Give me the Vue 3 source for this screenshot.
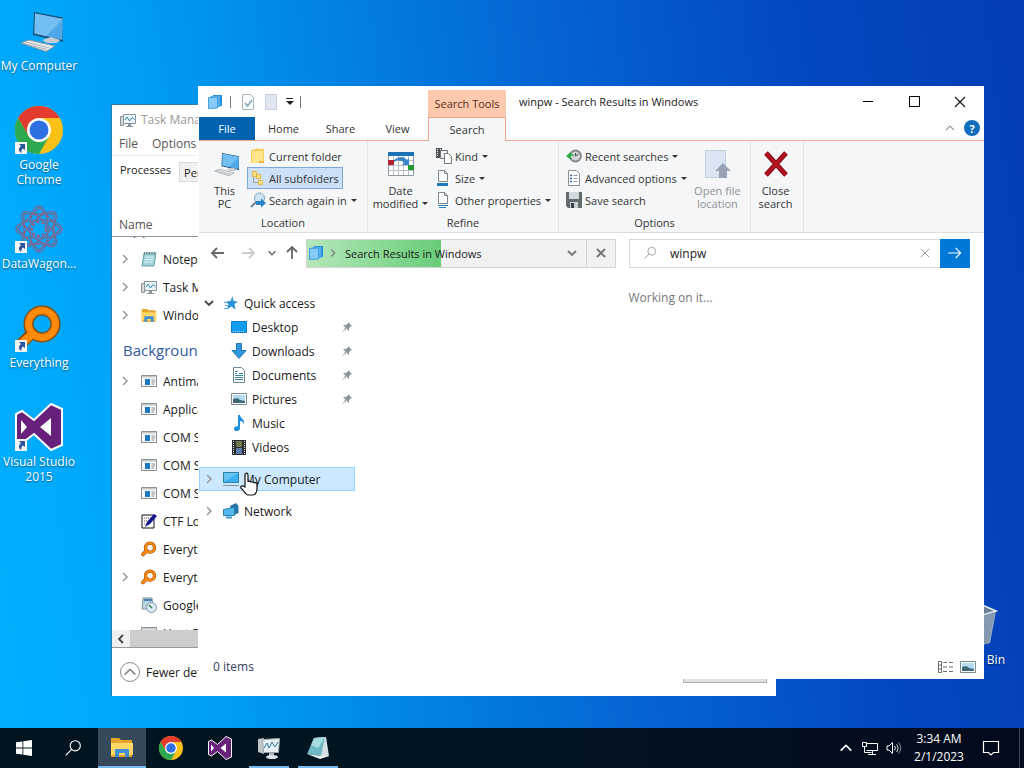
<template>
  <div class="screen">
    <svg class="sprite" aria-hidden="true">
      <symbol id="i-pc" viewBox="0 0 48 48">
        <path d="M19 5 50 11 49 35 18 28z" fill="#1d4f72" />
        <path d="M20 6.500 48 12 47.500 33 19.500 26.500z" fill="#4fa9e8" />
        <path d="M20 6.500 48 12 31 29 19.500 26.500z" fill="#74bff2" />
        <path d="M27 33 36 30 45 33 42 36 32 36z" fill="#c7cdd2" />
        <path d="M6 36 14 33 40 39 31 44.500z" fill="#e8ebed" stroke="#8d979e" />
        <path d="M11 35 34 41M9 36.500 32 42.500" stroke="#aab3b9" />
      </symbol>
      <symbol id="i-chrome" viewBox="0 0 48 48">
        <circle cx="24" cy="24" r="24" fill="#fbc116" />
        <path d="M24 12 44.800 12A24 24 0 0 0 3.200 12L13.600 30z" fill="#e33b2e" />
        <path d="M3.200 12A24 24 0 0 0 24 48L34.400 30 24 34 13.600 30z" fill="#2da94f" />
        <circle cx="24" cy="24" r="12" fill="#fff" />
        <circle cx="24" cy="24" r="9.500" fill="#2f6fe4" />
      </symbol>
      <symbol id="i-wagon" viewBox="0 0 48 48">
        <g fill="none" stroke="#6f6d9c" stroke-width="1.500">
          <rect x="9" y="9" width="30" height="30" />
          <rect x="9" y="9" width="30" height="30" transform="rotate(45 24 24)" />
          <ellipse cx="24" cy="24" rx="23" ry="9" />
          <ellipse cx="24" cy="24" rx="23" ry="9" transform="rotate(45 24 24)" />
          <ellipse cx="24" cy="24" rx="23" ry="9" transform="rotate(90 24 24)" />
          <ellipse cx="24" cy="24" rx="23" ry="9" transform="rotate(135 24 24)" />
          <circle cx="24" cy="24" r="7" stroke="#a05c78" stroke-width="2" stroke-dasharray="3 2" />
          <circle cx="24" cy="24" r="15" stroke="#a05c78" stroke-dasharray="2 4" />
        </g>
      </symbol>
      <symbol id="i-every" viewBox="0 0 48 48">
        <path d="M6 40 17 29" stroke="#9a4b00" stroke-width="11" stroke-linecap="round" />
        <circle cx="27" cy="20" r="13.500" fill="none" stroke="#8e4a0c" stroke-width="10" />
        <path d="M6 40 17 30" stroke="#ff8a0c" stroke-width="8" stroke-linecap="round" />
        <circle cx="27" cy="20" r="13.500" fill="none" stroke="#ff8a0c" stroke-width="7" />
      </symbol>
      <symbol id="i-vs" viewBox="0 0 48 48">
        <path
          d="M36 1 47 6V42L36 47 19 31 7 40 1 37V11L7 8 19 17z"
          fill="#68217a" stroke="#fff" stroke-width="2"
        />
        <path d="M36 15V33L25 24zM6 17V31L12 24z" fill="#fff" />
      </symbol>
      <symbol id="i-bin" viewBox="0 0 48 48">
        <path d="M6 8 28 2 46 10 40 42 24 46 10 42z" fill="#9fb3c6" />
        <path d="M6 8 28 2 46 10 26 16z" fill="#687f98" stroke="#e4ecf3" stroke-width="1.500" />
        <path d="M28 16 45 11 39 42 28 45z" fill="#8499ad" />
      </symbol>
      <symbol id="i-shortcut" viewBox="0 0 12 12">
        <path d="M0 0h12v12H0z" fill="#f4f4f4" />
        <path d="M4 2h6v6L8 6.500C6.500 7.500 6 9 6.500 11 3.500 9.500 3 6.500 6 4z" fill="#2b579a" />
      </symbol>
      <symbol id="i-taskmgr" viewBox="0 0 16 16">
        <path d="M0.500 4.500h3v9h-3z" fill="#d5d9db" stroke="#8b9599" />
        <path d="M3.500 2.500h12v9h-12z" fill="#eaf6fa" stroke="#8b9599" />
        <path d="M5 8 7 5 9.500 9 12 5.500 14.500 7.500" fill="none" stroke="#3187a8" />
        <path d="M8 12h3v2H8zM6 14h7v1H6z" fill="#8b9599" />
      </symbol>
      <symbol id="i-notepad" viewBox="0 0 16 16">
        <path d="M3 2h12l-2 13H1z" fill="#9fd3db" stroke="#6aa0a8" />
        <path d="M3.500 1v2.500M6 1v2.500M8.500 1v2.500M11 1v2.500M13.500 1v2.500" stroke="#69787b" />
        <path d="M4 6h8.500M3.700 8.500h8.500M3.300 11h8.500" stroke="#dff2f4" />
      </symbol>
      <symbol id="i-explorer" viewBox="0 0 24 24">
        <path d="M1 3h8l2 2h11v17H1z" fill="#e3a52c" />
        <path d="M1 8h22v12H1z" fill="#ffd767" />
        <path d="M5 14h14v8h-4v-4H9v4H5z" fill="#3f8fd2" />
      </symbol>
      <symbol id="i-proc" viewBox="0 0 16 16">
        <path d="M0.500 2.500h15v11h-15z" fill="#f7f9fa" stroke="#8a9297" />
        <path d="M1 3h14v1.500H1z" fill="#c3c9cd" />
        <path d="M4 6h5v6H4z" fill="#1c77c4" />
        <path d="M10.500 7h3.500M10.500 9h3.500M10.500 11h2.500" stroke="#8a9297" />
      </symbol>
      <symbol id="i-ctf" viewBox="0 0 16 16">
        <path d="M1 2h12v13H1z" fill="#fff" stroke="#111" />
        <path d="M3 5h7M3 8h5M3 11h3" stroke="#555" stroke-dasharray="1 1" />
        <path d="M4 14 6 9 13 1 16 3 9 11z" fill="#14148c" />
      </symbol>
      <symbol id="i-installer" viewBox="0 0 16 16">
        <path d="M2 1h9l1 11H1z" fill="#b9d3dd" stroke="#7b97a4" />
        <path d="M3 3h8" stroke="#4f7fb0" stroke-width="2" />
        <circle cx="10.500" cy="10.500" r="5" fill="#dbe9f6" stroke="#7d94ab" />
        <path d="M8 8 11 11" stroke="#3f8f4a" stroke-width="1.500" />
      </symbol>
      <symbol id="i-stack" viewBox="0 0 16 16">
        <path d="M6 1 15 1V12L6 13z" fill="#2a8fdb" />
        <path d="M3.500 2 13 2V13L3.500 14z" fill="#57b0ee" />
        <path d="M1.500 3.500 10.500 3V14L1.500 14.500z" fill="#86cbf8" stroke="#3f9fe2" />
      </symbol>
      <symbol id="i-folder" viewBox="0 0 16 16">
        <path d="M1 2 9 0 9 1h5v14H1z" fill="#f4cf5c" />
        <path d="M2 3h11v12H2z" fill="#ffe48c" />
        <path d="M9 13h5v2H9z" fill="#e5b93f" />
      </symbol>
      <symbol id="i-subfolders" viewBox="0 0 16 16">
        <path d="M3.500 6v6.500h5" fill="none" stroke="#9a9f9a" />
        <path d="M2.500 1.500h4v5h-4zM6.500 4.500h4v4h-4zM8.500 10.500h4v4h-4z" fill="#fbdf80" stroke="#e0b848" />
      </symbol>
      <symbol id="i-again" viewBox="0 0 16 16">
        <circle cx="9.500" cy="6" r="5" fill="#cfe6f5" stroke="#83a5bb" />
        <path d="M1 15 6 10" stroke="#6d8799" stroke-width="2" />
        <path d="M6 9h5V6.500L16 11l-5 4.500V13H6z" fill="#2783c7" />
      </symbol>
      <symbol id="i-calendar" viewBox="0 0 28 28">
        <path d="M1.500 2.500h25v23h-25z" fill="#fff" stroke="#8b979e" />
        <path d="M1 2h26v4H1z" fill="#1b72b8" />
        <path d="M2 10.500h24M2 15.500h24M2 20.500h24M6.500 6v19M11.500 6v19M16.500 6v19M21.500 6v19" stroke="#b6c0c6" />
        <path d="M1 10h6v5H1z" fill="#b5202c" />
        <path d="M21 15h6v5h-6z" fill="#22992f" />
        <path d="M7 10C12 6 17 6 20 10l2-2v7h-7l2-2c-3-3-6-3-10-1z" fill="#3a86c8" />
      </symbol>
      <symbol id="i-kind" viewBox="0 0 16 16">
        <path d="M0 0h6v10H0z" fill="#4a4f52" />
        <path d="M1.500 1v8M4.500 1v8" stroke="#fff" stroke-dasharray="1 1" />
        <path d="M4.500 2.500h7v8h-7z" fill="#eef1f3" stroke="#6f777c" />
        <path d="M8.500 5.500h4l3 3v7h-7z" fill="#fff" stroke="#6f777c" />
      </symbol>
      <symbol id="i-size" viewBox="0 0 16 16">
        <path d="M2.500 0.500h6l3 3v8h-9z" fill="#fff" stroke="#7d868b" />
        <path d="M8.500 0.500v3h3" fill="none" stroke="#7d868b" />
        <path d="M1 13h11v3H1z" fill="#1a78be" />
      </symbol>
      <symbol id="i-props" viewBox="0 0 16 16">
        <path d="M2.500 0.500h6l3 3v8h-9z" fill="#fff" stroke="#7d868b" />
        <path d="M8.500 0.500v3h3" fill="none" stroke="#7d868b" />
        <path d="M2 13.500h10M3 15.500h7" stroke="#2f83ba" />
      </symbol>
      <symbol id="i-recent" viewBox="0 0 16 16">
        <circle cx="9.500" cy="8" r="5.500" fill="#cfd4d6" stroke="#80888c" stroke-width="1.800" />
        <path d="M9.500 5V8l3-2" fill="none" stroke="#555" />
        <path d="M0 8 5 3.500V6c2 0 3 .5 4 2-1.500-.7-2.500-.5-4 0v4z" fill="#2fa84a" />
      </symbol>
      <symbol id="i-advanced" viewBox="0 0 16 16">
        <path d="M2.500 0.500h8l3 3v12h-11z" fill="#fff" stroke="#868e93" />
        <path d="M4 5.500h2M4 8.500h2M4 11.500h2" stroke="#35679a" stroke-width="1.500" />
        <path d="M7.500 5.500h4M7.500 8.500h4M7.500 11.500h4" stroke="#8d969b" />
      </symbol>
      <symbol id="i-save" viewBox="0 0 16 16">
        <path d="M0 0h16v16H2L0 14z" fill="#646b70" />
        <path d="M3 0h10v7H3z" fill="#d3dade" />
        <path d="M4 10h8v6H4z" fill="#c9d0d4" />
        <path d="M5 11h3v5H5z" fill="#3b4145" />
      </symbol>
      <symbol id="i-openloc" viewBox="0 0 28 28">
        <path d="M2.500 0.500h20v27h-20z" fill="#dce5f2" stroke="#c3cfe0" />
        <path d="M20 13 28 21H24v7h-8v-7h-4z" fill="#98a3b5" />
      </symbol>
      <symbol id="i-close-red" viewBox="0 0 28 28">
        <path d="M4 3 24 25M24 3 4 25" stroke="#7e0f18" stroke-width="5" />
        <path d="M4 3 24 25M24 3 4 25" stroke="#b81420" stroke-width="3" />
      </symbol>
      <symbol id="i-qcheck" viewBox="0 0 16 16">
        <path d="M2.500 0.500h8l3 3v12h-11z" fill="#fafcfd" stroke="#a8b5bd" />
        <path d="M5 9 7.500 12 12 6" fill="none" stroke="#7ea6bd" stroke-width="1.500" />
      </symbol>
      <symbol id="i-qblank" viewBox="0 0 16 16">
        <path d="M2.500 0.500h11v15h-11z" fill="#e0e6f1" stroke="#c8d0df" />
      </symbol>
      <symbol id="i-star" viewBox="0 0 16 16">
        <path d="M9.500 1 10.500 6 15 6.500 11.500 9 12.500 14.500 8.500 11.500 4 14.500 5.500 9.500 3 6.500 7.500 6z" fill="#2a92da" />
        <path d="M1 7.500h4M2 10.500h4M1 13.500h4" stroke="#4faae4" />
      </symbol>
      <symbol id="i-desktop" viewBox="0 0 16 16">
        <path d="M0.500 2.500h15v11h-15z" fill="#129cf0" stroke="#0a7fd0" />
        <path d="M2 12.500h9M12 12.500h2" stroke="#9ad8ff" stroke-dasharray="1 1" />
      </symbol>
      <symbol id="i-download" viewBox="0 0 16 16">
        <path d="M5.500 0.500h5v7H15L8 15.500 1 7.500h4.500z" fill="#3097dd" stroke="#2477b4" />
      </symbol>
      <symbol id="i-document" viewBox="0 0 16 16">
        <path d="M2.500 0.500h8l3 3v12h-11z" fill="#fff" stroke="#6e8795" />
        <path d="M4 4.500h3M8 6.500h4M4 8.500h8M4 10.500h8M4 12.500h8M4 6.500h2" stroke="#3a87ad" />
      </symbol>
      <symbol id="i-picture" viewBox="0 0 16 16">
        <path d="M0.500 2.500h15v11h-15z" fill="#fff" stroke="#7d8b94" />
        <path d="M2 4h12v8H2z" fill="#b4dbf1" />
        <path d="M2 8c4-1 5-1 7 1l5 1v2H2z" fill="#3e6878" />
      </symbol>
      <symbol id="i-music" viewBox="0 0 16 16">
        <path d="M7 0h2c0 3 5 4 4 9-1-2-2-3-4-3v7c0 4-6 4-6 1s3-3 4-2.500z" fill="#1e90e0" />
      </symbol>
      <symbol id="i-video" viewBox="0 0 16 16">
        <path d="M1 1h14v15H1z" fill="#2b2d2f" />
        <path d="M5 2h6v6H5z" fill="#6c7a4c" />
        <path d="M5 9h6v6H5z" fill="#5b7fa8" />
        <path d="M2.500 2v13M13.500 2v13" stroke="#e6e6e6" stroke-dasharray="1 1" />
      </symbol>
      <symbol id="i-monitor" viewBox="0 0 16 16">
        <path d="M0.500 1.500h15v10h-15z" fill="#3fb0ee" stroke="#2e7fa8" />
        <path d="M1 2h14L1 11z" fill="#68c4f5" />
        <path d="M0 14.500h16" stroke="#7d97a5" />
      </symbol>
      <symbol id="i-network" viewBox="0 0 16 16">
        <path d="M7 3 13 0 15.500 3V10L9 13z" fill="#2675a8" />
        <path d="M0.500 6.500 11.500 4.500V12.500L0.500 12.500z" fill="#55b9ee" stroke="#2c81b3" />
        <path d="M3 14.500h6" stroke="#3f9bd0" stroke-width="2" />
      </symbol>
      <symbol id="i-pin" viewBox="0 0 12 12">
        <path d="M7 1 11 5 9.500 5.500 8 7.500 8 10 5.500 7.500 1 11.500 4.500 6.500 2 4H5L7 2.500z" fill="#8b9298" />
      </symbol>
      <symbol id="i-right" viewBox="0 0 12 12">
        <path d="M4 2 8 6 4 10" fill="none" stroke="currentColor" stroke-width="1.500" />
      </symbol>
      <symbol id="i-down" viewBox="0 0 12 12">
        <path d="M2 4 6 8 10 4" fill="none" stroke="currentColor" stroke-width="1.800" />
      </symbol>
      <symbol id="i-up" viewBox="0 0 12 12">
        <path d="M2 8 6 4 10 8" fill="none" stroke="currentColor" stroke-width="1.200" />
      </symbol>
      <symbol id="i-arrow" viewBox="0 0 16 16">
        <path d="M2 8h12M9 3l5 5-5 5" fill="none" stroke="currentColor" stroke-width="1.800" />
      </symbol>
      <symbol id="i-go" viewBox="0 0 16 16">
        <path d="M2 8h11M8.500 3.500l4.500 4.500-4.500 4.500" fill="none" stroke="currentColor" />
      </symbol>
      <symbol id="i-x" viewBox="0 0 12 12">
        <path d="M1 1 11 11M11 1 1 11" stroke="currentColor" stroke-width="1.200" />
      </symbol>
      <symbol id="i-xbold" viewBox="0 0 12 12">
        <path d="M2 2 10 10M10 2 2 10" stroke="currentColor" stroke-width="2" />
      </symbol>
      <symbol id="i-search" viewBox="0 0 16 16">
        <circle cx="10" cy="6" r="4.500" fill="none" stroke="currentColor" />
        <path d="M1.500 14.500 7 9" stroke="currentColor" />
      </symbol>
      <symbol id="i-details" viewBox="0 0 16 16">
        <path d="M0.500 2.500h3v11h-3zM0.500 6h3M0.500 10h3" fill="none" stroke="#6d6d6d" />
        <path d="M5 3.500h11M5 8h11M5 12.500h11" stroke="#6d6d6d" stroke-dasharray="4 2" />
      </symbol>
      <symbol id="i-start" viewBox="0 0 16 16">
        <path d="M0 2.300 6.500 1.400V7.600H0zM7.300 1.300 16 0V7.600H7.300zM0 8.400H6.500V14.600L0 13.700zM7.300 8.400H16V16L7.300 14.700z" fill="#fff" />
      </symbol>
      <symbol id="i-tmbig" viewBox="0 0 24 24">
        <path d="M1 3 7 2v16l-6-2z" fill="#bfc7ca" />
        <path d="M5.500 3.500 22.500 2.500 21.500 16.500 6.500 16.500z" fill="#e6eef1" stroke="#9aa5aa" />
        <path d="M7 12 10 7 12 12 15 6 18 11 21 6" fill="none" stroke="#2f7f9f" />
        <path d="M12 17h5v3h-5z" fill="#aeb8bc" />
        <ellipse cx="15" cy="21" rx="6" ry="2" fill="#dfe4e6" />
      </symbol>
      <symbol id="i-npbig" viewBox="0 0 24 24">
        <path d="M9 2 20 1 23 20 15 22z" fill="#d7e0e2" />
        <path d="M8 2 19 1 15 20 1 18z" fill="#6fb9c4" />
        <path d="M8 2 19 1 12 12 5 9z" fill="#a6dbe2" />
        <path d="M1 18 15 20 23 20 14 23z" fill="#eef2f3" />
      </symbol>
      <symbol id="i-net" viewBox="0 0 16 16">
        <path d="M4.500 3.500h11v7h-11M10.500 11v4M6 14.500h8" fill="none" stroke="#fff" />
        <path d="M0.500 2.500h4v4h-4zM2.500 7v5.500h7" fill="none" stroke="#fff" />
      </symbol>
      <symbol id="i-vol" viewBox="0 0 16 16">
        <path d="M1 6h2l3.500-3.500v11L3 10H1z" fill="none" stroke="#fff" />
        <path d="M8.500 6c1 1.500 1 3 0 4.500M10.500 4.500c2 2.500 2 5 0 7.500" fill="none" stroke="#fff" />
        <path d="M12.500 2.500c3 4 3 7 0 11" fill="none" stroke="#8a94a0" />
      </symbol>
      <symbol id="i-action" viewBox="0 0 18 18">
        <path d="M1.500 2.500h15v11h-5L9 16l-2.500-2.500h-5z" fill="none" stroke="#fff" stroke-width="1.200" />
      </symbol>
      <symbol id="i-hand" viewBox="0 0 20 24">
        <path
          d="M6 15V3c0-2.500 3-2.500 3 0v7c0-1 3-1 3 .5 0-1 3-1 3 .7 0-1 3-.8 3 1.300V17c0 3-2 6-4 6H9c-2 0-4-4-7-7-1-2 1-3 4-1z"
          fill="#fff" stroke="#111" stroke-width="1.200"
        />
      </symbol>
    </svg>

    <main class="desktop">
      <div class="shortcuts">
        <a v-for="s in shortcuts" :key="s.label" href="#" class="shortcut">
          <span class="shortcut-pic">
            <svg class="pic"><use :href="'#i-' + s.icon" /></svg>
            <svg v-if="s.link" class="link-mark"><use href="#i-shortcut" /></svg>
          </span>
          <span>{{ s.label }}</span>
        </a>
      </div>
      <a href="#" class="shortcut recycle">
        <span class="shortcut-pic"><svg class="pic"><use href="#i-bin" /></svg></span>
        <span>Recycle Bin</span>
      </a>

      <!-- Task Manager -->
      <section class="window taskmgr">
        <header class="tm-title">
          <svg class="i16"><use href="#i-taskmgr" /></svg>
          <span>Task Manager</span>
        </header>
        <nav class="tm-menu">
          <button>File</button>
          <button>Options</button>
          <button>View</button>
        </nav>
        <div class="tm-tabs">
          <button class="active">Processes</button>
          <button>Performance</button>
        </div>
        <div class="tm-head">Name</div>
        <div class="tm-body">
          <div class="tm-list">
            <h2>Apps (3)</h2>
            <div v-for="(p, i) in apps" :key="i" class="tm-row">
              <svg class="i12" :class="{ blank: !p.open }"><use href="#i-right" /></svg>
              <svg class="i16"><use :href="'#i-' + p.icon" /></svg>
              <span>{{ p.name }}</span>
            </div>
            <h2>Background processes</h2>
            <div v-for="(p, i) in background" :key="i" class="tm-row">
              <svg class="i12" :class="{ blank: !p.open }"><use href="#i-right" /></svg>
              <svg class="i16"><use :href="'#i-' + p.icon" /></svg>
              <span>{{ p.name }}</span>
            </div>
          </div>
        </div>
        <div class="tm-scroll">
          <svg class="i12"><use href="#i-down" /></svg>
          <span class="thumb"></span>
        </div>
        <footer class="tm-foot">
          <button class="fewer">
            <span class="ring"><svg class="i16"><use href="#i-up" /></svg></span>
            Fewer details
          </button>
          <button class="end">End task</button>
        </footer>
      </section>

      <!-- Explorer -->
      <section class="window explorer">
        <header class="title-bar">
          <div class="quick">
            <svg class="i16"><use href="#i-stack" /></svg>
            <i class="bar"></i>
            <svg class="i16"><use href="#i-qcheck" /></svg>
            <svg class="i16"><use href="#i-qblank" /></svg>
            <span class="drop"></span>
            <i class="bar"></i>
          </div>
          <div class="context">Search Tools</div>
          <h1>winpw - Search Results in Windows</h1>
          <div class="controls">
            <button aria-label="Minimize"><span class="min"></span></button>
            <button aria-label="Maximize"><span class="max"></span></button>
            <button aria-label="Close"><svg class="i12"><use href="#i-x" /></svg></button>
          </div>
        </header>

        <nav class="tabs">
          <button class="file">File</button>
          <button>Home</button>
          <button>Share</button>
          <button>View</button>
          <button class="active">Search</button>
          <div class="tabs-end">
            <button aria-label="Collapse ribbon"><svg class="i12"><use href="#i-up" /></svg></button>
            <button class="help">?</button>
          </div>
        </nav>

        <div class="ribbon">
          <div v-for="g in groups" :key="g.label" class="group" :class="g.id">
            <div class="group-items">
              <button v-if="g.lead" class="big">
                <svg class="i28"><use :href="'#i-' + g.lead.icon" /></svg>
                <span>{{ g.lead.top }}</span>
                <span :class="{ caret: g.lead.caret }">{{ g.lead.bottom }}</span>
              </button>
              <div v-if="g.items" class="small-col">
                <button v-for="it in g.items" :key="it.label" class="small" :class="{ on: it.on }">
                  <svg class="i16"><use :href="'#i-' + it.icon" /></svg>
                  <span :class="{ caret: it.caret }">{{ it.label }}</span>
                </button>
              </div>
              <button v-if="g.tail" class="big" :disabled="g.tail.disabled">
                <svg class="i28"><use :href="'#i-' + g.tail.icon" /></svg>
                <span>{{ g.tail.top }}</span>
                <span>{{ g.tail.bottom }}</span>
              </button>
            </div>
            <div class="group-label">{{ g.label }}</div>
          </div>
        </div>

        <div class="address-row">
          <div class="history">
            <button aria-label="Back"><svg class="i16 flip"><use href="#i-arrow" /></svg></button>
            <button aria-label="Forward" disabled><svg class="i16"><use href="#i-arrow" /></svg></button>
            <button aria-label="Recent" class="narrow"><svg class="i10"><use href="#i-down" /></svg></button>
            <button aria-label="Up"><svg class="i16 turn"><use href="#i-arrow" /></svg></button>
          </div>
          <div class="address">
            <div class="crumbs">
              <div class="progress" :style="{ width: progress + '%' }"></div>
              <svg class="i16"><use href="#i-stack" /></svg>
              <svg class="i10"><use href="#i-right" /></svg>
              <button class="crumb">Search Results in Windows</button>
              <button aria-label="Previous locations"><svg class="i12"><use href="#i-down" /></svg></button>
            </div>
            <button class="stop" aria-label="Stop"><svg class="i12"><use href="#i-xbold" /></svg></button>
          </div>
          <form class="search" @submit.prevent>
            <svg class="i16"><use href="#i-search" /></svg>
            <input v-model="query" type="text" aria-label="Search" />
            <button type="button" class="clear" aria-label="Clear" @click="query = ''">
              <svg class="i10"><use href="#i-x" /></svg>
            </button>
            <button class="go" aria-label="Go"><svg class="i18"><use href="#i-go" /></svg></button>
          </form>
        </div>

        <div class="content">
          <aside class="tree">
            <a href="#" class="node root">
              <svg class="i12 dark"><use href="#i-down" /></svg>
              <svg class="i16"><use href="#i-star" /></svg>
              <span>Quick access</span>
            </a>
            <a v-for="n in places" :key="n.label" href="#" class="node child">
              <svg class="i16"><use :href="'#i-' + n.icon" /></svg>
              <span>{{ n.label }}</span>
              <svg v-if="n.pinned" class="i12 pin"><use href="#i-pin" /></svg>
            </a>
            <a href="#" class="node root spaced selected">
              <svg class="i12"><use href="#i-right" /></svg>
              <svg class="i16"><use href="#i-monitor" /></svg>
              <span>My Computer</span>
              <svg class="cursor"><use href="#i-hand" /></svg>
            </a>
            <a href="#" class="node root spaced">
              <svg class="i12"><use href="#i-right" /></svg>
              <svg class="i16"><use href="#i-network" /></svg>
              <span>Network</span>
            </a>
          </aside>
          <div class="results">Working on it...</div>
        </div>

        <footer class="status">
          <span>0 items</span>
          <div class="views">
            <button aria-label="Details"><svg class="i16"><use href="#i-details" /></svg></button>
            <button aria-label="Large icons"><svg class="i16"><use href="#i-picture" /></svg></button>
          </div>
        </footer>
      </section>
    </main>

    <footer class="taskbar">
      <button
        v-for="t in tasks"
        :key="t.icon"
        :aria-label="t.name"
        :class="{ current: t.current, running: t.running }"
      >
        <svg :class="t.size"><use :href="'#i-' + t.icon" /></svg>
      </button>
      <div class="tray">
        <button aria-label="Show hidden icons"><svg class="i16"><use href="#i-up" /></svg></button>
        <button aria-label="Network"><svg class="i16"><use href="#i-net" /></svg></button>
        <button aria-label="Volume"><svg class="i16"><use href="#i-vol" /></svg></button>
        <button class="clock"><span>3:34 AM</span><span>2/1/2023</span></button>
        <button class="action" aria-label="Notifications"><svg class="i18"><use href="#i-action" /></svg></button>
      </div>
    </footer>
  </div>
</template>

<script setup>
import { ref } from 'vue'

const query = ref('winpw')
const progress = ref(48)

const shortcuts = [
  { label: 'My Computer', icon: 'pc' },
  { label: 'Google Chrome', icon: 'chrome', link: true },
  { label: 'DataWagon...', icon: 'wagon', link: true },
  { label: 'Everything', icon: 'every', link: true },
  { label: 'Visual Studio 2015', icon: 'vs', link: true }
]

const apps = [
  { name: 'Notepad', icon: 'notepad', open: true },
  { name: 'Task Manager', icon: 'taskmgr', open: true },
  { name: 'Windows Explorer', icon: 'explorer', open: true }
]

const background = [
  { name: 'Antimalware Service Executable', icon: 'proc', open: true },
  { name: 'Application Frame Host', icon: 'proc' },
  { name: 'COM Surrogate', icon: 'proc' },
  { name: 'COM Surrogate', icon: 'proc' },
  { name: 'COM Surrogate', icon: 'proc' },
  { name: 'CTF Loader', icon: 'ctf' },
  { name: 'Everything', icon: 'every' },
  { name: 'Everything', icon: 'every', open: true },
  { name: 'Google Installer', icon: 'installer' },
  { name: 'Host Process', icon: 'proc' }
]

const groups = [
  {
    id: 'location',
    label: 'Location',
    lead: { icon: 'pc', top: 'This', bottom: 'PC' },
    items: [
      { label: 'Current folder', icon: 'folder' },
      { label: 'All subfolders', icon: 'subfolders', on: true },
      { label: 'Search again in', icon: 'again', caret: true }
    ]
  },
  {
    id: 'refine',
    label: 'Refine',
    lead: { icon: 'calendar', top: 'Date', bottom: 'modified', caret: true },
    items: [
      { label: 'Kind', icon: 'kind', caret: true },
      { label: 'Size', icon: 'size', caret: true },
      { label: 'Other properties', icon: 'props', caret: true }
    ]
  },
  {
    id: 'options',
    label: 'Options',
    items: [
      { label: 'Recent searches', icon: 'recent', caret: true },
      { label: 'Advanced options', icon: 'advanced', caret: true },
      { label: 'Save search', icon: 'save' }
    ],
    tail: { icon: 'openloc', top: 'Open file', bottom: 'location', disabled: true }
  },
  {
    id: 'close',
    label: '',
    tail: { icon: 'close-red', top: 'Close', bottom: 'search' }
  }
]

const places = [
  { label: 'Desktop', icon: 'desktop', pinned: true },
  { label: 'Downloads', icon: 'download', pinned: true },
  { label: 'Documents', icon: 'document', pinned: true },
  { label: 'Pictures', icon: 'picture', pinned: true },
  { label: 'Music', icon: 'music' },
  { label: 'Videos', icon: 'video' }
]

const tasks = [
  { name: 'Start', icon: 'start', size: 'i16' },
  { name: 'Search', icon: 'search', size: 'i18' },
  { name: 'File Explorer', icon: 'explorer', size: 'i24', current: true },
  { name: 'Google Chrome', icon: 'chrome', size: 'i24' },
  { name: 'Visual Studio', icon: 'vs', size: 'i24' },
  { name: 'Task Manager', icon: 'tmbig', size: 'i24', running: true },
  { name: 'Notepad', icon: 'npbig', size: 'i24', running: true }
]
</script>

<style>
body {
  margin: 0;
}
</style>

<style scoped>
.screen {
  height: 100vh;
  display: flex;
  flex-direction: column;
  overflow: hidden;
  font-family: "Open Sans", "Noto Sans", sans-serif;
  font-size: 12px;
  line-height: 15px;
  color: #1a1a1a;
  background: linear-gradient(82deg, #00b0ff 0%, #00a6fa 14%, #008cea 32%, #0566d4 56%, #0449c2 78%, #033db6 100%);
}

.sprite {
  position: absolute;
  width: 0;
  height: 0;
}

button,
input {
  font: inherit;
  color: inherit;
  background: none;
  border: 0;
  padding: 0;
  margin: 0;
}

button {
  display: flex;
  align-items: center;
  justify-content: center;
}

a {
  color: inherit;
  text-decoration: none;
}

svg {
  flex: none;
  display: block;
}

.i10 { width: 10px; height: 10px; }
.i12 { width: 12px; height: 12px; }
.i16 { width: 16px; height: 16px; }
.i18 { width: 18px; height: 18px; }
.i24 { width: 24px; height: 24px; }
.i28 { width: 28px; height: 28px; }

.desktop {
  flex: 1;
  position: relative;
  min-height: 0;
}

.shortcuts {
  width: 78px;
  padding-top: 7px;
  display: grid;
  grid-auto-rows: 99px;
}

.shortcut {
  display: flex;
  flex-direction: column;
  align-items: center;
  gap: 3px;
  color: #fff;
  text-align: center;
  text-shadow: 0 1px 2px rgba(0, 0, 0, 0.5);
}

.shortcut-pic {
  position: relative;
}

.pic {
  width: 48px;
  height: 48px;
}

.link-mark {
  position: absolute;
  left: 0;
  bottom: 0;
  width: 12px;
  height: 12px;
}

.recycle {
  position: absolute;
  right: 19px;
  bottom: 61px;
}

.window {
  position: absolute;
  display: flex;
  flex-direction: column;
  background: #fff;
}

/* task manager */
.taskmgr {
  left: 111px;
  top: 104px;
  right: 248px;
  bottom: 32px;
  border-left: 1px solid #2f7ca8;
  border-top: 1px solid #2f7ca8;
}

.tm-title {
  height: 29px;
  display: flex;
  align-items: center;
  gap: 5px;
  padding: 0 8px;
  color: #999;
}

.tm-menu {
  height: 21px;
  display: flex;
  align-items: flex-start;
  gap: 14px;
  padding: 2px 7px 0;
  box-sizing: border-box;
  color: #555;
}

.tm-tabs {
  height: 25px;
  display: flex;
  align-items: flex-end;
  padding-top: 1px;
  border-top: 1px solid #eee;
  font-size: 11px;
}

.tm-tabs button {
  height: 20px;
  padding: 0 4px;
  background: #f0f0f0;
  border: 1px solid #d9d9d9;
}

.tm-tabs .active {
  height: 24px;
  padding: 0 8px 2px;
  background: #fff;
  border: 0;
}

.tm-head {
  height: 55px;
  display: flex;
  align-items: flex-end;
  padding: 0 7px 4px;
  color: #555;
  border-bottom: 1px solid #8f979c;
  box-sizing: border-box;
}

.tm-body {
  flex: 1;
  min-height: 0;
  overflow: hidden;
}

.tm-list {
  margin-top: -30px;
}

.tm-list h2 {
  height: 38px;
  box-sizing: border-box;
  margin: 0;
  padding: 9px 11px 0;
  font-size: 15px;
  line-height: 24px;
  font-weight: 400;
  color: #2f5aa0;
}

.tm-row {
  height: 28px;
  display: flex;
  align-items: center;
  padding-left: 7px;
  white-space: nowrap;
}

.tm-row .i12 {
  color: #999;
  margin-right: 10px;
}

.tm-row .i16 {
  margin-right: 6px;
}

.tm-row .blank {
  visibility: hidden;
}

.tm-scroll {
  height: 17px;
  display: flex;
  align-items: center;
  background: #f0f0f0;
  border-bottom: 1px solid #999;
  color: #444;
}

.tm-scroll .i12 {
  margin: 0 3px;
  transform: rotate(90deg);
}

.thumb {
  width: 60%;
  height: 17px;
  background: #cdcdcd;
}

.tm-foot {
  height: 48px;
  display: flex;
  align-items: center;
  justify-content: space-between;
  padding: 0 9px 0 8px;
}

.fewer {
  gap: 6px;
}

.ring {
  border: 1px solid #888;
  border-radius: 50%;
  color: #888;
  padding: 1px;
}

.end {
  width: 84px;
  height: 22px;
  background: #e1e1e1;
  border: 1px solid #adadad;
}

/* explorer */
.explorer {
  left: 198px;
  top: 86px;
  right: 40px;
  bottom: 49px;
  padding-left: 1px;
}

.title-bar,
.tabs,
.ribbon,
.address {
  font-size: 11px;
}

.title-bar {
  height: 31px;
  display: flex;
}

.quick {
  width: 229px;
  box-sizing: border-box;
  padding-left: 8px;
  display: flex;
  align-items: center;
  gap: 7px;
}

.bar {
  width: 1px;
  height: 12px;
  background: #777;
  margin-right: 2px;
}

.drop {
  width: 7px;
  border-top: 1px solid #222;
  padding-top: 2px;
}

.drop::after {
  content: "";
  display: block;
  border: 4px solid transparent;
  border-top-color: #222;
  border-bottom: 0;
}

.context {
  width: 78px;
  margin-top: 4px;
  display: flex;
  align-items: center;
  justify-content: center;
  background: #fcc9ad;
  color: #5a2d1a;
}

.title-bar h1 {
  flex: 1;
  margin: 0 0 0 13px;
  font-size: 11px;
  line-height: 31px;
  font-weight: 400;
}

.controls {
  display: flex;
  padding-right: 1px;
}

.controls button {
  width: 46px;
}

.min {
  width: 10px;
  height: 1px;
  background: #000;
}

.max {
  width: 9px;
  height: 9px;
  border: 1px solid #000;
}

.tabs {
  height: 24px;
  display: flex;
  box-shadow: inset 0 -1px #f2a48c;
}

.tabs > button {
  width: 57px;
  height: 23px;
  color: #333;
}

.tabs > .file {
  width: 56px;
  color: #fff;
  background: #0063b1;
}

.tabs > .active {
  width: 78px;
  height: 24px;
  box-sizing: border-box;
  margin-left: 2px;
  background: #f5f6f7;
  border: 1px solid #f2a48c;
  border-bottom: 0;
}

.tabs-end {
  margin-left: auto;
  display: flex;
  align-items: center;
  gap: 8px;
  padding: 0 4px 2px 0;
  color: #999;
}

.help {
  width: 16px;
  height: 16px;
  border-radius: 50%;
  background: #0f6cbd;
  color: #fff;
  font-weight: 700;
}

.ribbon {
  height: 91px;
  display: flex;
  background: #f5f6f7;
  border-bottom: 1px solid #dcdddf;
  color: #333;
}

.group {
  box-sizing: border-box;
  display: flex;
  flex-direction: column;
  border-right: 1px solid #e1e3e5;
  padding-top: 4px;
}

.location { width: 169px; }
.refine { width: 191px; }
.options { width: 192px; }
.close { width: 53px; }

.group-items {
  display: flex;
  height: 70px;
}

.group-label {
  text-align: center;
  line-height: 16px;
}

.big {
  flex: none;
  flex-direction: column;
  justify-content: flex-start;
  line-height: 13px;
  padding-top: 5px;
}

.big svg {
  margin-bottom: 6px;
}

.big:disabled {
  color: #8d9096;
}

.location .big { width: 48px; padding-left: 3px; box-sizing: border-box; }
.refine .big { width: 65px; }
.options .big { flex: 1; padding-right: 6px; }
.close .big { width: 49px; }
.options .small-col { padding-left: 4px; }

.small-col {
  display: flex;
  flex-direction: column;
  align-items: flex-start;
}

.small {
  height: 22px;
  box-sizing: border-box;
  gap: 3px;
  padding: 0 3px 0 2px;
  border: 1px solid transparent;
  white-space: nowrap;
}

.small.on {
  background: #cce0f7;
  border-color: #7da7d9;
}

.caret::after {
  content: "";
  display: inline-block;
  margin-left: 4px;
  vertical-align: 3px;
  border: 3px solid transparent;
  border-top-color: #333;
  border-bottom: 0;
}

.address-row {
  height: 40px;
  display: flex;
  align-items: center;
  padding-right: 14px;
}

.history {
  width: 107px;
  box-sizing: border-box;
  display: flex;
  align-items: center;
  padding-left: 11px;
  gap: 14px;
  color: #666;
}

.history .narrow {
  margin: 0 -7px 0 -3px;
}

.history button:disabled {
  color: #ccc;
}

.flip {
  transform: scaleX(-1);
}

.turn {
  transform: rotate(-90deg);
}

.address {
  flex: 1;
  height: 29px;
  box-sizing: border-box;
  display: flex;
  border: 1px solid #d4d4d4;
  background: #f1f1f1;
  color: #777;
}

.crumbs {
  flex: 1;
  position: relative;
  display: flex;
  align-items: center;
  gap: 4px;
  padding: 0 8px 0 1px;
}

.crumbs > :not(.progress) {
  position: relative;
}

.progress {
  position: absolute;
  left: 0;
  top: 0;
  bottom: 0;
  background: linear-gradient(90deg, #b4e6ba, #8edb98 50%, #68cc78);
}

.crumb {
  color: #1a1a1a;
  margin: 0 auto 0 3px;
}

.stop {
  width: 29px;
  border-left: 1px solid #d4d4d4;
}

.search {
  width: 341px;
  height: 29px;
  box-sizing: border-box;
  margin-left: 13px;
  display: flex;
  align-items: center;
  border: 1px solid #d9d9d9;
  border-right: 0;
  color: #999;
}

.search > .i16 {
  margin: 0 10px 0 13px;
  width: 14px;
}

.search input {
  flex: 1;
  min-width: 0;
  padding-left: 3px;
  color: #1a1a1a;
  outline: 0;
}

.clear {
  width: 30px;
}

.go {
  width: 30px;
  height: 29px;
  background: #0078d7;
  color: #fff;
}

.content {
  flex: 1;
  min-height: 0;
  display: flex;
}

.tree {
  width: 156px;
  padding-top: 18px;
}

.node {
  height: 24px;
  display: flex;
  align-items: center;
}

.node .i12 {
  color: #999;
  margin: 0 8px 0 4px;
}

.node .dark {
  color: #444;
}

.node .i16 {
  margin-right: 5px;
}

.child {
  padding-left: 32px;
}

.node .pin {
  margin: 0 2px 0 auto;
}

.spaced {
  margin-top: 8px;
}

.selected {
  position: relative;
  background: #cce8ff;
  box-shadow: inset 0 0 0 1px #99d1ff;
}

.cursor {
  position: absolute;
  left: 40px;
  top: 5px;
  width: 20px;
  height: 24px;
}

.results {
  flex: 1;
  padding: 17px 0 0 2px;
  text-align: center;
  color: #777;
}

.status {
  height: 25px;
  display: flex;
  align-items: center;
  justify-content: space-between;
  padding: 0 8px 0 14px;
  color: #34405e;
}

.views {
  display: flex;
  gap: 6px;
}

/* taskbar */
.taskbar {
  height: 40px;
  display: flex;
  gap: 1px;
  color: #fff;
  background: linear-gradient(90deg, #02141f, #031522 50%, #020a1d);
}

.taskbar > button {
  width: 48px;
  box-sizing: border-box;
}

.current {
  background: #35495a;
  border-bottom: 2px solid #76b9ed;
}

.running {
  background: linear-gradient(#76b9ed, #76b9ed) center bottom / 40px 2px no-repeat;
}

.tray {
  margin-left: auto;
  display: flex;
  align-items: center;
  gap: 8px;
  padding-right: 4px;
}

.clock {
  flex-direction: column;
  width: 58px;
  line-height: 18px;
}

.action {
  width: 44px;
  height: 40px;
  padding-right: 14px;
  border-right: 1px solid #3a4558;
}
</style>
